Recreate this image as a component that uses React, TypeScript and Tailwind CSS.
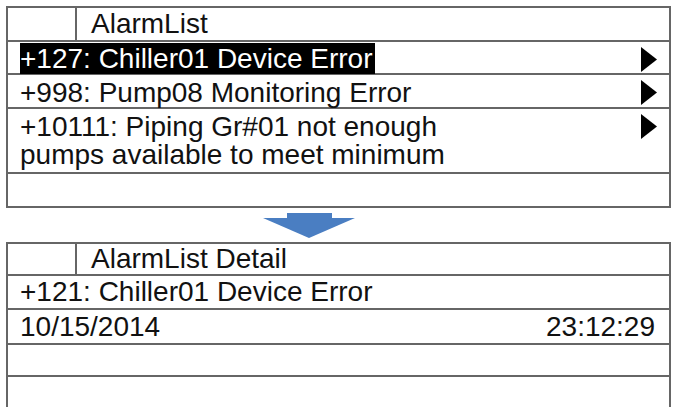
const rowBase = 'flex items-center border-b-2 border-[#666]';

function PlayArrow() {
  return (
    <svg width="16" height="25" viewBox="0 0 16 25" className="shrink-0" aria-hidden>
      <polygon points="0,0 16,12.5 0,25" fill="#000" />
    </svg>
  );
}

function TitleRow({ title, height }: { title: string; height: string }) {
  return (
    <div className={`${rowBase} ${height}`}>
      <div className="h-full w-[69px] shrink-0 border-r-2 border-[#666]" />
      <span className="pl-[14px]">{title}</span>
    </div>
  );
}

function AlarmRow({
  label,
  selected,
  height,
}: {
  label: React.ReactNode;
  selected?: boolean;
  height: string;
}) {
  return (
    <div className={`${rowBase} ${height} items-start justify-between pl-[12px] pr-[12px]`}>
      <span
        className={
          selected
            ? 'mt-[1px] flex h-[31px] items-center bg-black pr-[2px] text-white'
            : 'mt-[4px]'
        }
      >
        {label}
      </span>
      <div className="mt-[5px]">
        <PlayArrow />
      </div>
    </div>
  );
}

function DownArrow() {
  return (
    <svg width="92" height="25" viewBox="0 0 92 25" aria-hidden>
      <rect x="24" y="0" width="45" height="6" fill="#4a7ec2" />
      <polygon points="0,5 92,5 46,25" fill="#4a7ec2" />
    </svg>
  );
}

export default function App() {
  return (
    <div
      className="h-[407px] w-[676px] overflow-hidden bg-white pl-[6px] pr-[5px] pt-[6px] text-[28px] leading-[28px] text-[#111]"
      style={{ fontFamily: '"Liberation Sans", Arial, sans-serif' }}
    >
      <div className="border-x-2 border-t-2 border-[#666]">
        <TitleRow title="AlarmList" height="h-[34px]" />
        <AlarmRow label="+127: Chiller01 Device Error" selected height="h-[33px]" />
        <AlarmRow label="+998: Pump08 Monitoring Error" height="h-[34px]" />
        <AlarmRow
          label={
            <>
              +10111: Piping Gr#01 not enough
              <br />
              pumps available to meet minimum
            </>
          }
          height="h-[65px]"
        />
        <div className={`${rowBase} h-[34px]`} />
      </div>

      <div className="flex h-[34px] items-start justify-center pr-[60px] pt-[5px]">
        <DownArrow />
      </div>

      <div className="border-x-2 border-t-2 border-[#666]">
        <TitleRow title="AlarmList Detail" height="h-[32px]" />
        <div className={`${rowBase} h-[34px] pl-[12px]`}>+121: Chiller01 Device Error</div>
        <div className={`${rowBase} h-[35px] justify-between pl-[12px] pr-[14px]`}>
          <span>10/15/2014</span>
          <span>23:12:29</span>
        </div>
        <div className={`${rowBase} h-[32px]`} />
        <div className={`${rowBase} h-[33px]`} />
      </div>
    </div>
  );
}
